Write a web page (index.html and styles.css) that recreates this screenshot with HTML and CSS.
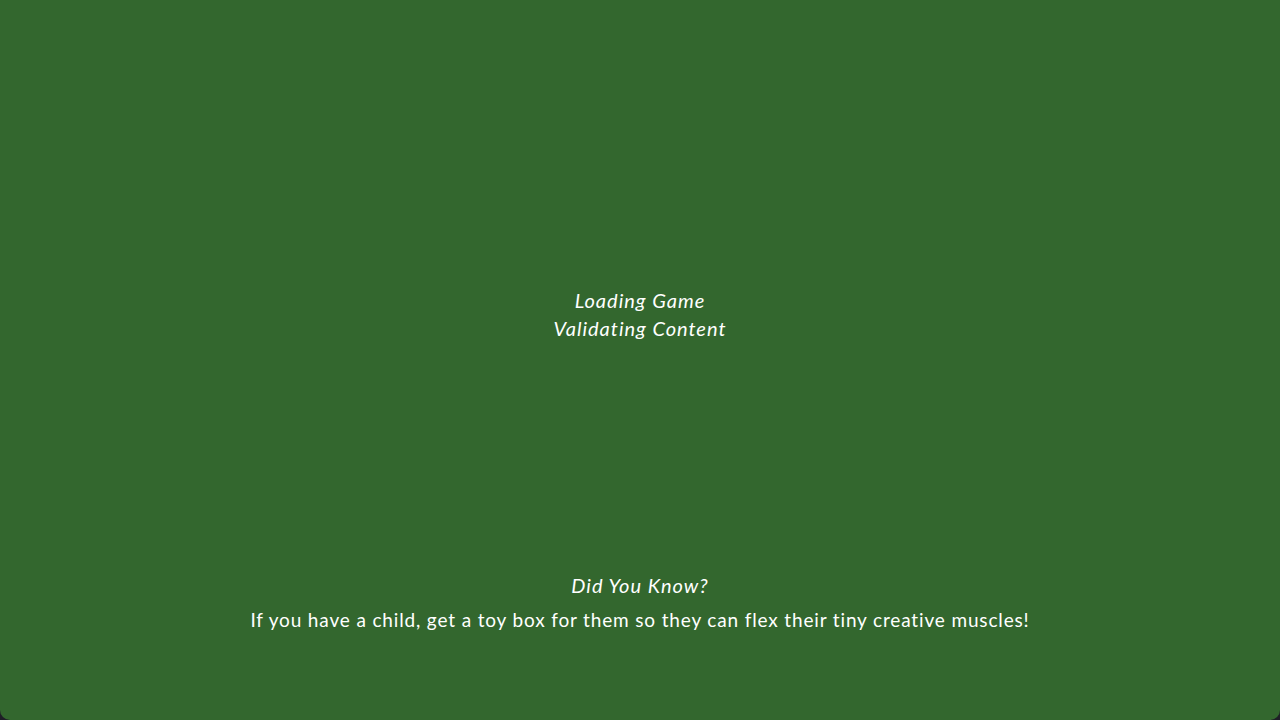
FILE: index.html
```html
<!DOCTYPE html>
<html lang="en">
<head>
<meta charset="utf-8">
<title>Loading Game</title>
<link rel="stylesheet" href="styles.css">
</head>
<body>
<main class="screen">
  <section class="loading">
    <p class="loading-line">Loading Game</p>
    <p class="loading-line">Validating Content</p>
  </section>
  <section class="tips">
    <h2 class="tips-title">Did You Know?</h2>
    <p class="tips-text">If you have a child, get a toy box for them so they can flex their tiny creative muscles!</p>
  </section>
</main>
</body>
</html>
```
FILE: styles.css
```css
html, body {
  margin: 0;
  padding: 0;
  height: 100%;
  background: #1f1f27;
}
.screen {
  height: 720px;
  box-sizing: border-box;
  background: #33672e;
  border-radius: 0 0 10px 10px;
  display: flex;
  flex-direction: column;
  justify-content: space-between;
  color: #ffffff;
  font-family: "Lato", "Open Sans", sans-serif;
  text-align: center;
}
.loading {
  padding-top: 286px;
}
.loading-line {
  margin: 0;
  font-size: 20px;
  line-height: 28px;
  font-style: italic;
  letter-spacing: 1px;
}
.tips {
  padding-bottom: 87px;
}
.tips-title {
  margin: 0 0 8px;
  font-size: 20px;
  line-height: 28px;
  font-style: italic;
  font-weight: normal;
  letter-spacing: 1px;
}
.tips-text {
  margin: 0;
  font-size: 19px;
  line-height: 26px;
  letter-spacing: 0.85px;
}
```
